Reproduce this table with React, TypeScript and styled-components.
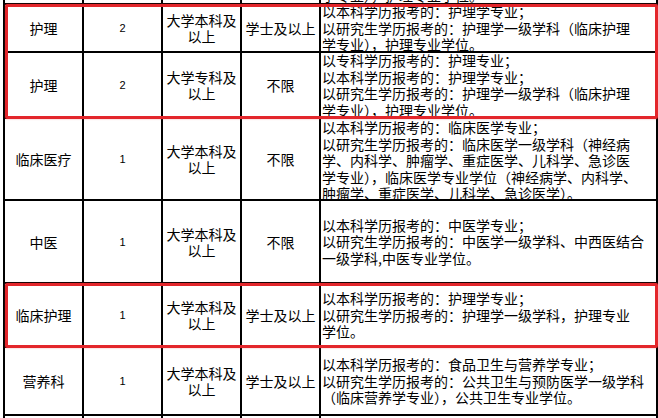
import React from 'react';
import styled, { createGlobalStyle } from 'styled-components';

const Global = createGlobalStyle`
  html, body { margin: 0; padding: 0; background: #fff; }
  body { font-family: "Noto Sans CJK SC", "Noto Sans", sans-serif; color: #000; }
`;

const Viewport = styled.div`
  width: 658px;
  height: 418px;
  overflow: hidden;
  background: #fff;
  padding-left: 3px;
  box-sizing: border-box;
`;

const Table = styled.div`
  width: 653px;
  border-right: 2px solid #000;
  margin-top: -45px;
`;

const Row = styled.div<{ $h: number }>`
  display: grid;
  grid-template-columns: 79px 79px 79px 79px 335px;
  height: ${(p) => p.$h}px;
  border-bottom: 2px solid #000;
  box-sizing: border-box;
`;

const Cell = styled.div`
  border-left: 2px solid #000;
  box-sizing: border-box;
  display: flex;
  align-items: center;
  justify-content: center;
  text-align: center;
  overflow: hidden;
  font-size: 14px;
  line-height: 16px;
`;

const NumCell = styled(Cell)`
  font-family: "Liberation Sans", Arial, sans-serif;
  font-size: 11px;
`;

const DescCell = styled(Cell)<{ $align?: 'top' | 'center' | 'bottom' }>`
  justify-content: flex-start;
  text-align: left;
  align-items: ${(p) => (p.$align === 'top' ? 'flex-start' : p.$align === 'bottom' ? 'flex-end' : 'center')};
  padding-left: 1px;
  line-height: 16.5px;
`;

const Lines = styled.div`
  display: flex;
  flex-direction: column;
`;

const Line = styled.span`
  white-space: nowrap;
`;

const Group = styled.div`
  position: relative;
`;

const Highlight = styled.div`
  position: absolute;
  top: -1px;
  left: 2px;
  right: -2px;
  bottom: 0;
  border: 3px solid #e3262b;
  border-radius: 2px;
  box-shadow: 0 0 1.5px rgba(227, 38, 43, 0.6);
  pointer-events: none;
`;

type RowData = {
  h: number;
  name: string;
  count: string;
  edu: string[];
  degree: string;
  desc: string[];
  align?: 'top' | 'center' | 'bottom';
};

const rows: RowData[] = [
  {
    h: 50,
    name: '',
    count: '',
    edu: [],
    degree: '',
    desc: ['以研究生学历报考的：护理学一级学科（临床护理', '学专业），护理专业学位。'],
    align: 'bottom',
  },
  {
    h: 48,
    name: '护理',
    count: '2',
    edu: ['大学本科及', '以上'],
    degree: '学士及以上',
    desc: ['以本科学历报考的：护理学专业；', '以研究生学历报考的：护理学一级学科（临床护理', '学专业），护理专业学位。'],
  },
  {
    h: 66,
    name: '护理',
    count: '2',
    edu: ['大学专科及', '以上'],
    degree: '不限',
    desc: [
      '以专科学历报考的：护理专业；',
      '以本科学历报考的：护理学专业；',
      '以研究生学历报考的：护理学一级学科（临床护理',
      '学专业），护理专业学位。',
    ],
  },
  {
    h: 82,
    name: '临床医疗',
    count: '1',
    edu: ['大学本科及', '以上'],
    degree: '不限',
    desc: [
      '以本科学历报考的：临床医学专业；',
      '以研究生学历报考的：临床医学一级学科（神经病',
      '学、内科学、肿瘤学、重症医学、儿科学、急诊医',
      '学专业），临床医学专业学位（神经病学、内科学、',
      '肿瘤学、重症医学、儿科学、急诊医学）。',
    ],
    align: 'top',
  },
  {
    h: 83,
    name: '中医',
    count: '1',
    edu: ['大学本科及', '以上'],
    degree: '不限',
    desc: ['以本科学历报考的：中医学专业；', '以研究生学历报考的：中医学一级学科、中西医结合', '一级学科,中医专业学位。'],
  },
  {
    h: 64,
    name: '临床护理',
    count: '1',
    edu: ['大学本科及', '以上'],
    degree: '学士及以上',
    desc: ['以本科学历报考的：护理学专业；', '以研究生学历报考的：护理学一级学科，护理专业', '学位。'],
  },
  {
    h: 68,
    name: '营养科',
    count: '1',
    edu: ['大学本科及', '以上'],
    degree: '学士及以上',
    desc: [
      '以本科学历报考的：食品卫生与营养学专业；',
      '以研究生学历报考的：公共卫生与预防医学一级学科',
      '（临床营养学专业），公共卫生专业学位。',
    ],
  },
  {
    h: 50,
    name: '',
    count: '',
    edu: [],
    degree: '',
    desc: [],
  },
];

const TableRow = ({ r }: { r: RowData }) => (
  <Row $h={r.h}>
    <Cell>{r.name}</Cell>
    <NumCell>{r.count}</NumCell>
    <Cell>
      <Lines>
        {r.edu.map((t, i) => (
          <Line key={i}>{t}</Line>
        ))}
      </Lines>
    </Cell>
    <Cell>{r.degree}</Cell>
    <DescCell $align={r.align}>
      <Lines>
        {r.desc.map((t, i) => (
          <Line key={i}>{t}</Line>
        ))}
      </Lines>
    </DescCell>
  </Row>
);

export default function App() {
  return (
    <>
      <Global />
      <Viewport>
        <Table>
          <TableRow r={rows[0]} />
          <Group>
            <TableRow r={rows[1]} />
            <TableRow r={rows[2]} />
            <Highlight />
          </Group>
          <TableRow r={rows[3]} />
          <TableRow r={rows[4]} />
          <Group>
            <TableRow r={rows[5]} />
            <Highlight />
          </Group>
          <TableRow r={rows[6]} />
          <TableRow r={rows[7]} />
        </Table>
      </Viewport>
    </>
  );
}
